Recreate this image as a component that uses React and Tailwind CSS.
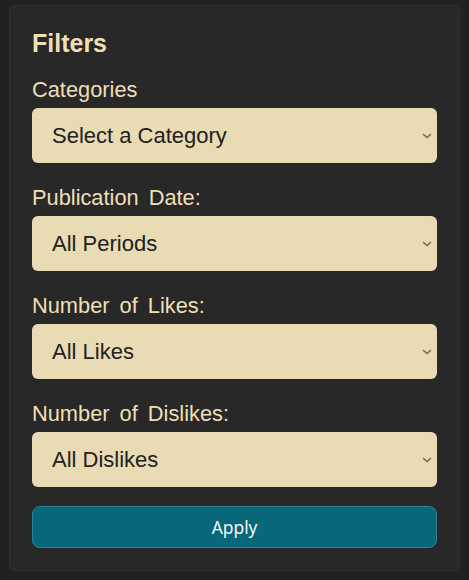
import React from 'react';

const filters = [
  { label: 'Categories', options: ['Select a Category', 'Technology', 'Science', 'Culture'] },
  { label: 'Publication Date:', options: ['All Periods', 'Today', 'This Week', 'This Month'] },
  { label: 'Number of Likes:', options: ['All Likes', '10+', '50+', '100+'] },
  { label: 'Number of Dislikes:', options: ['All Dislikes', '10+', '50+', '100+'] },
];

function Chevron() {
  return (
    <svg className="pointer-events-none absolute right-[5px] top-1/2 -translate-y-1/2" width="10" height="6" viewBox="0 0 10 6" fill="none">
      <path d="M1 1l4 3.5L9 1" stroke="#6f6a5c" strokeWidth="1.6" />
    </svg>
  );
}

export default function App() {
  return (
    <div className="min-h-[580px] bg-[#1f2123] pt-[5px] px-[9px] pb-[9px] font-['Liberation_Sans',Arial,sans-serif]">
      <div className="w-[451px] rounded-[6px] border border-[#303030] bg-[#282828] px-[22px] pt-[23px] pb-[22px]">
        <h2 className="text-[25px] leading-[28px] font-bold text-[#efdfb7]">Filters</h2>
        <div className="mt-[20px] flex flex-col gap-[22px]">
          {filters.map(f => (
            <div key={f.label} className="flex flex-col gap-[6px]">
              <label className="text-[21.8px] leading-[25px] text-[#efdfb7] [word-spacing:4px]">{f.label}</label>
              <div className="relative">
                <select className="h-[55px] w-full appearance-none rounded-[6px] bg-[#e9dbb3] pl-[20px] pr-[20px] font-['Liberation_Sans',Arial,sans-serif] text-[22px] text-[#212121] outline-none">
                  {f.options.map(o => (
                    <option key={o}>{o}</option>
                  ))}
                </select>
                <Chevron />
              </div>
            </div>
          ))}
        </div>
        <button className="mt-[19px] h-[42px] w-full rounded-[8px] border border-[#2b8595] bg-[#08687a] font-['Open_Sans',sans-serif] text-[17.5px] font-medium text-white">
          Apply
        </button>
      </div>
    </div>
  );
}
